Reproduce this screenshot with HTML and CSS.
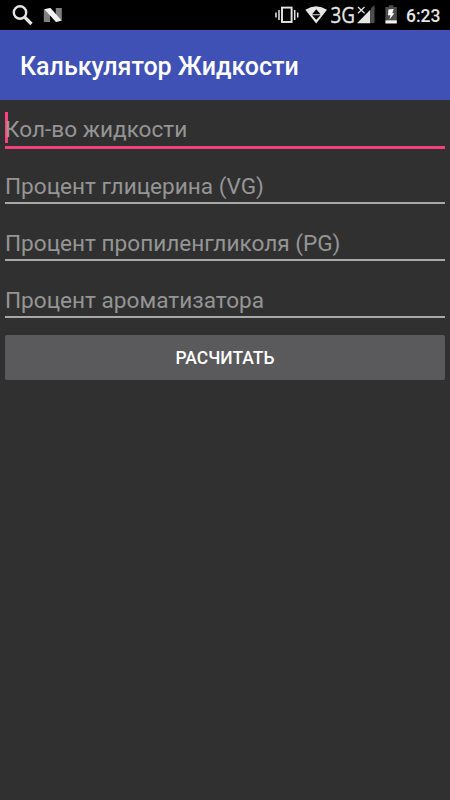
FILE: index.html
```html
<!DOCTYPE html>
<html lang="ru">
<head>
    <meta charset="UTF-8">
    <meta name="viewport" content="width=device-width, initial-scale=1.0">
    <title>Калькулятор Жидкости</title>
    <link rel="stylesheet" href="styles.css">
</head>
<body>
    <div class="status">
        <svg class="icons" width="70" height="30" viewBox="0 0 70 30">
            <circle cx="20" cy="12.5" r="6.2" fill="none" stroke="#e6e6e6" stroke-width="2.4"/>
            <path d="M24.5 17L31.5 24" stroke="#e6e6e6" stroke-width="3.2"/>
            <path d="M43.8 9.5L50 8V22H43.8zM55.8 8H61.8V20.5L55.8 22z" fill="#808080"/>
            <path d="M44.3 9.3L50.5 8L61.6 20.6L56 22z" fill="#f2f2f2"/>
        </svg>
        <svg class="icons" width="130" height="30" viewBox="270 0 130 30">
            <!-- vibrate -->
            <rect x="282" y="7.6" width="9.6" height="14.4" fill="none" stroke="#e6e6e6" stroke-width="1.9"/>
            <path d="M279 10V20M294.7 10V20M276 12.5V17.5M297.7 12.5V17.5" stroke="#e6e6e6" stroke-width="1.5"/>
            <!-- wifi -->
            <path d="M305.3 9.8Q316 2.6 327 9.8L316.2 23.5z" fill="#e6e6e6"/>
            <path d="M316.3 9.3L320.5 14.2H312.1zM316.3 19.8L320.5 15.2H312.1z" fill="#000"/>
            <!-- network -->
            <text class="net" x="330.5" y="23" textLength="24.5" lengthAdjust="spacingAndGlyphs">3G</text>
            <path d="M371 8L374.5 5.2V23H371z" fill="#4d4d4d"/>
            <path d="M357 23.2L370.3 9.8V23.2z" fill="#e6e6e6"/>
            <path d="M358 7L364.5 13.2M364.5 7L358 13.2" stroke="#e6e6e6" stroke-width="1.2"/>
            <!-- battery -->
            <path d="M385.4 7H389V5.2H393.3V7H396.8V20.5H385.4z" fill="#4d4d4d"/>
            <rect x="385.4" y="20.3" width="11.4" height="3.2" fill="#f2f2f2"/>
            <path d="M388.4 9.6L393.6 9L392.3 13.2H394.3L389.5 19.4L390.5 15.2H388z" fill="#fff"/>
        </svg>
        <span class="time">6:23</span>
    </div>
    <div class="bar">Калькулятор Жидкости</div>
    <div class="form">
        <div class="field active"><span>Кол-во жидкости</span></div>
        <div class="field"><span>Процент глицерина (VG)</span></div>
        <div class="field"><span>Процент пропиленгликоля (PG)</span></div>
        <div class="field last"><span>Процент ароматизатора</span></div>
        <button class="btn">РАСЧИТАТЬ</button>
    </div>
</body>
</html>
```
FILE: styles.css
```css
*{
    margin: 0;
    padding: 0;
    box-sizing: border-box;
}
body,html{
    height: 100%;
    background-color: #303030;
    font-family: Roboto, "Liberation Sans", sans-serif;
    overflow: hidden;
}
.status{
    display: flex;
    height: 30px;
    padding-right: 10px;
    background: #000;
}
.icons{
    display: block;
}
.icons + .icons{
    margin-left: auto;
}
.net{
    font-family: "Open Sans", sans-serif;
    font-size: 21.5px;
    fill: #e6e6e6;
    stroke: #e6e6e6;
    stroke-width: .3px;
}
.time{
    width: 40px;
    padding-left: 6px;
    font-size: 17.5px;
    font-weight: 500;
    line-height: 33px;
    color: #e6e6e6;
}
.bar{
    height: 70px;
    padding-left: 20px;
    background: #3f51b5;
    color: #fff;
    font-size: 25px;
    font-weight: 500;
    line-height: 74px;
    white-space: nowrap;
}
.form{
    padding: 11px 5px 0;
}
.field{
    position: relative;
    height: 37px;
    margin-bottom: 20px;
    border-bottom: 2px solid #a9a7a8;
    color: #959595;
    font-size: 22.6px;
    line-height: 40px;
    white-space: nowrap;
}
.field span{
    position: relative;
}
.field.active{
    height: 38px;
    margin-bottom: 18px;
    border-bottom: 3px solid #f53f7d;
    line-height: 38px;
}
.field.last{
    line-height: 39px;
}
/* text cursor */
.field.active::before{
    content: "";
    position: absolute;
    left: 0;
    top: 1px;
    width: 2.5px;
    height: 31px;
    background: #ff4081;
}
.btn{
    display: block;
    width: 100%;
    height: 45px;
    margin-top: -3px;
    border: none;
    border-radius: 2px;
    background: #5a5a5c;
    color: #fff;
    font-family: inherit;
    font-size: 17.5px;
    font-weight: 500;
    line-height: 47px;
}
```
